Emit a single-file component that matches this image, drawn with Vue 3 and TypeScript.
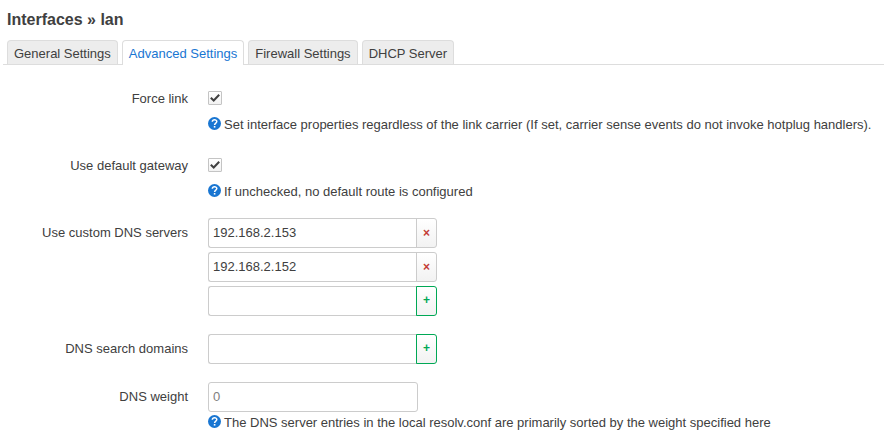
<script setup lang="ts">
import { reactive, ref } from 'vue'

const tabs: string[] = ['General Settings', 'Advanced Settings', 'Firewall Settings', 'DHCP Server']
const active = ref<string>('Advanced Settings')

interface ListField {
  id: string
  label: string
  values: string[]
  draft: string
}

const forceLink = ref(true)
const defaultGateway = ref(true)
const weight = ref('')
const lists = reactive<ListField[]>([
  { id: 'dns', label: 'Use custom DNS servers', values: ['192.168.2.153', '192.168.2.152'], draft: '' },
  { id: 'search', label: 'DNS search domains', values: [], draft: '' },
])

function add(field: ListField): void {
  const value = field.draft.trim()
  if (value) {
    field.values.push(value)
    field.draft = ''
  }
}
</script>

<template>
  <main class="page">
    <h2 class="title">Interfaces » lan</h2>

    <nav class="tabs">
      <a
        v-for="tab in tabs"
        :key="tab"
        href="#"
        class="tab"
        :class="{ active: tab === active }"
        @click.prevent="active = tab"
      >{{ tab }}</a>
    </nav>

    <form class="form" @submit.prevent>
      <div class="row">
        <label class="label" for="force-link">Force link</label>
        <div class="field">
          <div class="check">
            <span class="box">
              <input id="force-link" v-model="forceLink" type="checkbox" />
              <svg v-if="forceLink" viewBox="0 0 14 14"><path d="M2.8 6.8 5.7 9.5 11.2 3.8" /></svg>
            </span>
          </div>
          <p class="help">
            <svg class="icon" viewBox="0 0 13 13"><circle cx="6.5" cy="6.5" r="6.5" /><path d="M4.3 4.7C4.5 2.2 8.8 2.2 8.8 4.6 8.8 6.2 6.6 6 6.6 8" /><rect x="5.8" y="9" width="1.6" height="1.6" /></svg>
            <span>Set interface properties regardless of the link carrier (If set, carrier sense events do not invoke hotplug handlers).</span>
          </p>
        </div>
      </div>

      <div class="row">
        <label class="label" for="default-gateway">Use default gateway</label>
        <div class="field">
          <div class="check">
            <span class="box">
              <input id="default-gateway" v-model="defaultGateway" type="checkbox" />
              <svg v-if="defaultGateway" viewBox="0 0 14 14"><path d="M2.8 6.8 5.7 9.5 11.2 3.8" /></svg>
            </span>
          </div>
          <p class="help">
            <svg class="icon" viewBox="0 0 13 13"><circle cx="6.5" cy="6.5" r="6.5" /><path d="M4.3 4.7C4.5 2.2 8.8 2.2 8.8 4.6 8.8 6.2 6.6 6 6.6 8" /><rect x="5.8" y="9" width="1.6" height="1.6" /></svg>
            <span>If unchecked, no default route is configured</span>
          </p>
        </div>
      </div>

      <div v-for="field in lists" :key="field.id" class="row">
        <label class="label" :for="field.id">{{ field.label }}</label>
        <div class="field list">
          <div v-for="(value, i) in field.values" :key="i" class="group">
            <input v-model="field.values[i]" class="text" type="text" />
            <button class="btn remove" type="button" @click="field.values.splice(i, 1)">×</button>
          </div>
          <div class="group">
            <input :id="field.id" v-model="field.draft" class="text" type="text" />
            <button class="btn add" type="button" @click="add(field)">+</button>
          </div>
        </div>
      </div>

      <div class="row">
        <label class="label" for="weight">DNS weight</label>
        <div class="field">
          <input id="weight" v-model="weight" class="text" type="text" placeholder="0" />
          <p class="help">
            <svg class="icon" viewBox="0 0 13 13"><circle cx="6.5" cy="6.5" r="6.5" /><path d="M4.3 4.7C4.5 2.2 8.8 2.2 8.8 4.6 8.8 6.2 6.6 6 6.6 8" /><rect x="5.8" y="9" width="1.6" height="1.6" /></svg>
            <span>The DNS server entries in the local resolv.conf are primarily sorted by the weight specified here</span>
          </p>
        </div>
      </div>
    </form>
  </main>
</template>

<style>
body {
  background: #fff;
}
</style>

<style scoped>
.page {
  padding: 11px 0 0 3px;
  font: 13px/18px "Liberation Sans", Arial, sans-serif;
  color: #404040;
}
.title {
  margin: 0 0 11px;
  padding-left: 4px;
  font-size: 16px;
  line-height: 18px;
}
.tabs {
  display: flex;
  gap: 4px;
  padding-left: 4px;
  border-bottom: 1px solid #ddd;
}
.tab {
  padding: 4px 6px 1px;
  border: 1px solid #ddd;
  border-bottom: 0;
  border-radius: 4px 4px 0 0;
  background: #ededed;
  color: #404040;
  text-decoration: none;
  white-space: nowrap;
}
.tab.active {
  margin-bottom: -1px;
  padding-bottom: 2px;
  background: #fff;
  color: #1976d2;
}
.form {
  display: flex;
  flex-direction: column;
  gap: 18px;
  padding: 19px 0 0 4px;
}
.row {
  display: grid;
  grid-template-columns: 181px 1fr;
  column-gap: 20px;
}
.label {
  height: 30px;
  line-height: 30px;
  text-align: right;
}
.check {
  display: flex;
  align-items: center;
  height: 28px;
}
.box {
  display: grid;
  width: 14px;
  height: 14px;
}
.box input,
.box svg {
  grid-area: 1 / 1;
  width: 14px;
  height: 14px;
  margin: 0;
}
.box input {
  appearance: none;
  box-sizing: border-box;
  border: 1px solid #c4c4c4;
  border-radius: 1px;
  background: linear-gradient(#fff, #f2f2f2);
}
.box svg {
  z-index: 1;
  pointer-events: none;
}
.box path {
  fill: none;
  stroke: #404040;
  stroke-width: 2;
}
.help {
  display: flex;
  gap: 3px;
  margin: 3px 0 0;
  line-height: 16px;
}
.check + .help {
  margin-top: 5px;
}
.icon {
  flex: none;
  width: 13px;
  height: 13px;
}
.icon circle {
  fill: #1976d2;
}
.icon path {
  fill: none;
  stroke: #fff;
  stroke-width: 1.5;
}
.icon rect {
  fill: #fff;
}
.list {
  display: flex;
  flex-direction: column;
  gap: 4px;
}
.group {
  display: flex;
}
.text {
  display: block;
  box-sizing: border-box;
  width: 210px;
  height: 30px;
  padding: 4px 4px 6px;
  border: 1px solid #ccc;
  border-radius: 3px;
  background: #fff;
  color: #404040;
  font: inherit;
}
.text::placeholder {
  color: #808080;
  opacity: 1;
}
.group .text {
  width: 209px;
  border-right: 0;
  border-radius: 3px 0 0 3px;
}
.btn {
  box-sizing: border-box;
  width: 21px;
  height: 30px;
  margin-left: -1px;
  padding: 0;
  border: 1px solid #ccc;
  border-radius: 0 3px 3px 0;
  background: linear-gradient(#fff, #f2f2f2);
  font: bold 12px/18px "Liberation Sans", Arial, sans-serif;
  text-align: center;
}
.remove {
  color: #c43c35;
}
.add {
  padding-bottom: 2px;
  border-color: #00a855;
  color: #00a855;
}
</style>
